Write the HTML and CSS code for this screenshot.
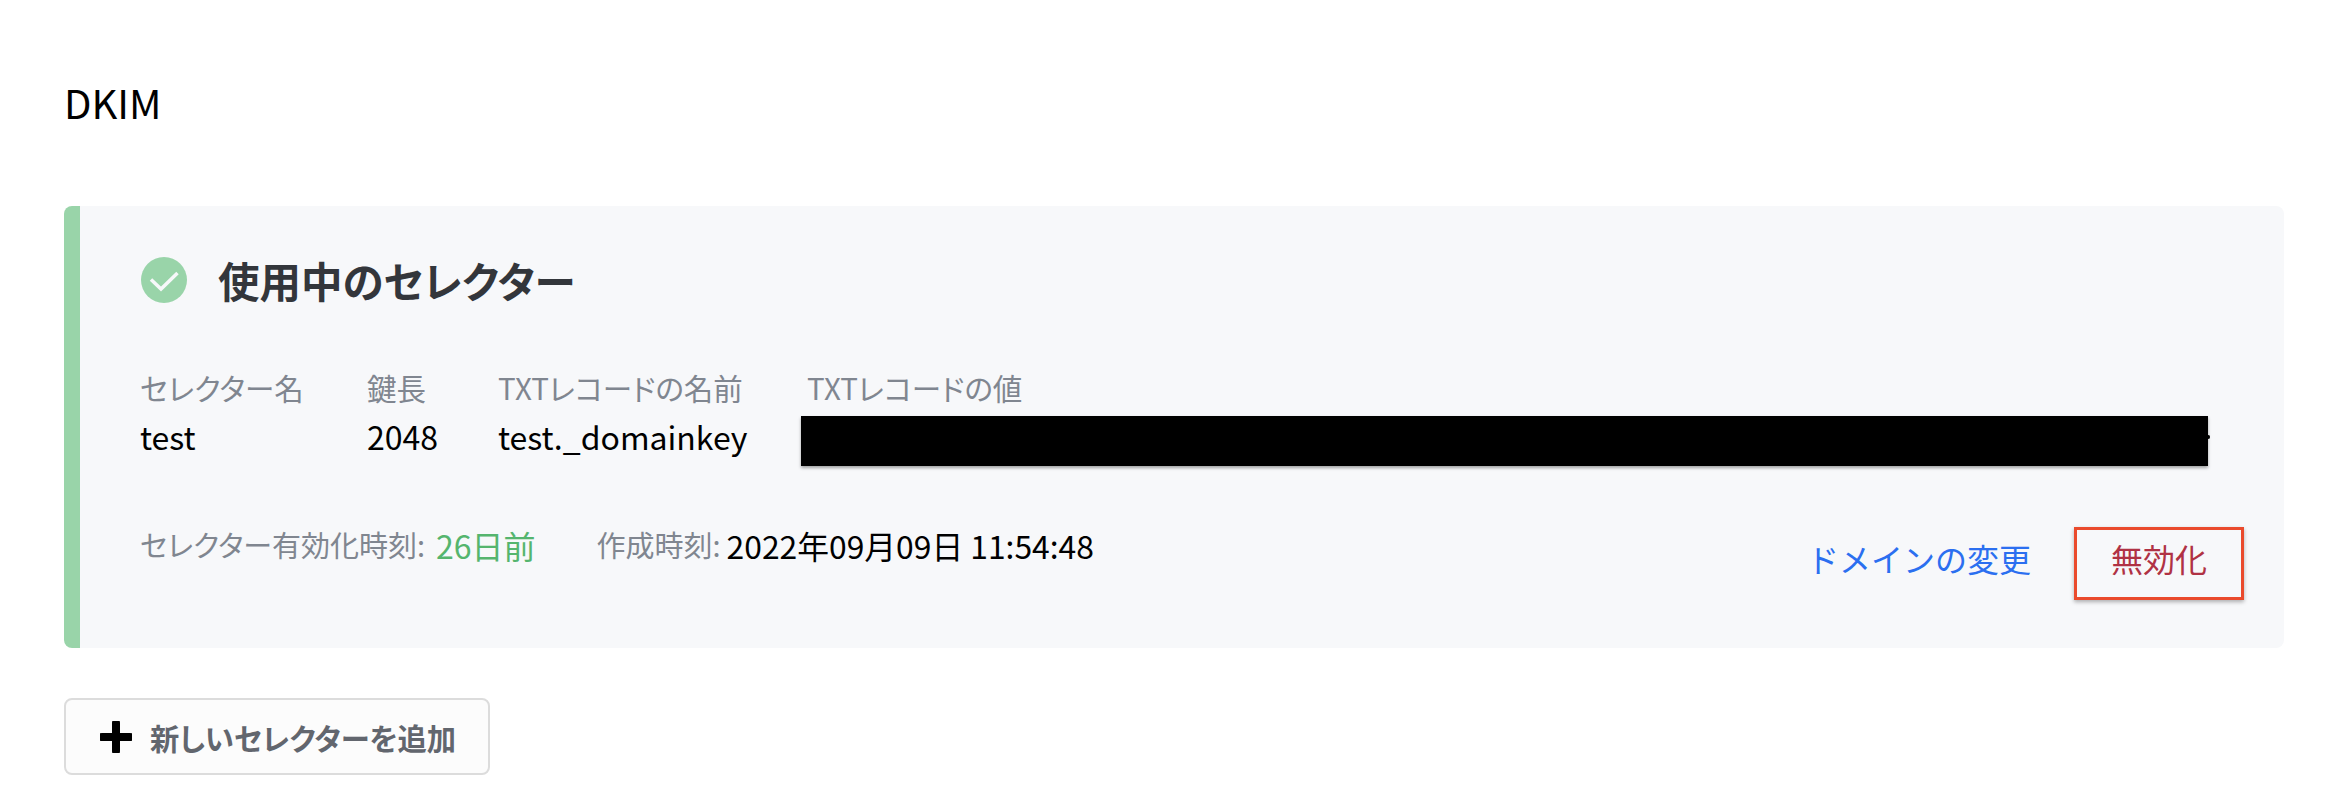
FILE: index.html
```html
<!DOCTYPE html>
<html lang="ja">
<head>
  <meta charset="UTF-8">
  <title>DKIM</title>
  <link rel="stylesheet" href="styles.css">
</head>
<body>
  <h1 class="page-title">DKIM</h1>

  <div class="selector-card">
    <div class="card-header">
      <svg class="check-icon" viewBox="0 0 46 46" width="46" height="46">
        <circle cx="23" cy="23" r="23" fill="#99d4a9"/>
        <path d="M10 22.500L20 32L36.500 16" fill="none" stroke="#f7f8fa" stroke-width="3.500"/>
      </svg>
      <h2 class="card-title">使用中のセレクター</h2>
    </div>

    <div class="record-table">
      <div class="label">セレクター名</div>
      <div class="label">鍵長</div>
      <div class="label">TXTレコードの名前</div>
      <div class="label label-txt">TXTレコードの値</div>
      <div class="value">test</div>
      <div class="value">2048</div>
      <div class="value">test._domainkey</div>
      <div class="redacted"></div>
    </div>

    <div class="card-footer">
      <div class="meta">
        <span class="label">セレクター有効化時刻:</span>
        <span class="age">26日前</span>
        <span class="label created">作成時刻:</span>
        <span class="value">2022年09月09日 11:54:48</span>
      </div>
      <div class="actions">
        <a class="link-change">ドメインの変更</a>
        <a class="btn-disable">無効化</a>
      </div>
    </div>
  </div>

  <button class="btn-add">
    <svg class="plus-icon" viewBox="0 0 32 32" width="32" height="32">
      <path d="M16 2v28M2 16h28" fill="none" stroke="#000" stroke-width="8" stroke-linecap="round"/>
    </svg>
    新しいセレクターを追加
  </button>
</body>
</html>
```

FILE: styles.css
```css
* {
  box-sizing: border-box;
}

body {
  margin: 0;
  padding: 72px 52px 0 64px;
  background: #fff;
  font-family: "Noto Sans CJK JP", "Noto Sans", sans-serif;
  font-size: 29.5px;
  font-feature-settings: "palt";
  color: #000;
}

.page-title {
  margin: 0 0 74px;
  font-size: 40px;
  font-weight: 400;
  line-height: 60px;
}

.selector-card {
  height: 442px;
  padding: 51px 40px 48px 60px;
  border-left: 16px solid #99d4a9;
  border-radius: 8px;
  background: #f7f8fa;
}

.card-header {
  display: flex;
  align-items: center;
  gap: 31px;
}

.check-icon {
  margin-left: 1px;
}

.card-title {
  margin: 0;
  font-size: 41.5px;
  font-weight: 700;
  line-height: 44px;
  color: #33363b;
}

.record-table {
  display: grid;
  grid-template-columns: 227px 131px 303px 1407px;
  grid-template-rows: 40px 50px;
  row-gap: 7px;
  margin-top: 66px;
}

.label {
  color: #808690;
  line-height: 37px;
}

.label-txt {
  margin-left: 6px;
}

.value {
  font-size: 32px;
  line-height: 40px;
}

.redacted {
  position: relative;
  background: #000;
  box-shadow: 0 2px 3px rgba(0, 0, 0, 0.35);
}

/* tail of the value that sticks out past the black box */
.redacted::after {
  content: "";
  position: absolute;
  top: 19px;
  right: -2px;
  width: 3px;
  height: 4px;
  border-radius: 50%;
  background: #000;
}

.card-footer {
  display: flex;
  justify-content: space-between;
  align-items: flex-start;
  margin-top: 61px;
}

.meta {
  display: flex;
  align-items: center;
  height: 35px;
  font-size: 29px;
}

.meta .value {
  margin-left: 6px;
  font-size: 31.8px;
}

.age {
  margin-left: 11px;
  font-size: 32px;
  color: #55b56e;
}

.created {
  margin-left: 61px;
}

.actions {
  display: flex;
  align-items: center;
  gap: 43px;
  font-size: 32px;
  font-feature-settings: normal;
}

.link-change {
  margin-bottom: 12px;
  color: #2b6ff0;
}

.btn-disable {
  display: flex;
  align-items: center;
  justify-content: center;
  width: 170px;
  height: 73px;
  padding-bottom: 12px;
  border: 3px solid #ea4a2c;
  box-shadow: 0 2px 4px rgba(0, 0, 0, 0.3);
  color: #b03244;
}

.btn-add {
  display: flex;
  align-items: center;
  gap: 18px;
  width: 426px;
  height: 77px;
  margin-top: 50px;
  padding: 0 0 0 34px;
  border: 2px solid #dcdcdc;
  border-radius: 8px;
  background: #fcfcfc;
  font-family: inherit;
  font-feature-settings: inherit;
  font-size: 29.3px;
  font-weight: 700;
  color: #62666e;
}
```
